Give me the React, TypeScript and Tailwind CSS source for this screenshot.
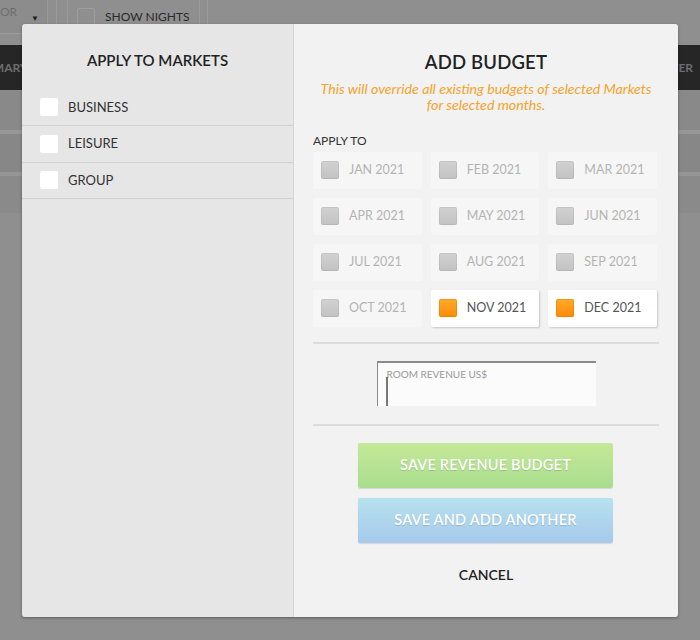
const months = [
  { label: 'JAN 2021', on: false },
  { label: 'FEB 2021', on: false },
  { label: 'MAR 2021', on: false },
  { label: 'APR 2021', on: false },
  { label: 'MAY 2021', on: false },
  { label: 'JUN 2021', on: false },
  { label: 'JUL 2021', on: false },
  { label: 'AUG 2021', on: false },
  { label: 'SEP 2021', on: false },
  { label: 'OCT 2021', on: false },
  { label: 'NOV 2021', on: true },
  { label: 'DEC 2021', on: true },
]

const markets = ['BUSINESS', 'LEISURE', 'GROUP']

function BackPage() {
  return (
    <div className="flex flex-col">
      <div className="flex h-[45px] items-start">
        <div className="flex h-[34px] w-[48px] items-start justify-between border-r border-b border-[#9a9a9a] bg-[#8c8c8c] pl-0 pr-2 pt-[3px] text-[12px] text-[#6f6f6f]">
          <span>OR</span>
          <span className="mt-[9px] text-[8px] text-[#222]">▼</span>
        </div>
        <div className="ml-[8px] h-[45px] w-px bg-[#9a9a9a]" />
        <div className="ml-[10px] flex h-[34px] w-[133px] items-start gap-[10px] border border-t-0 border-[#9a9a9a] pl-[9px] pt-[8px]">
          <div className="h-[18px] w-[18px] rounded-[2px] border border-[#9e9e9e] bg-[#8f8f8f]" />
          <span className="text-[12px] leading-[18px] text-[#2a2a2a]">SHOW NIGHTS</span>
        </div>
        <div className="ml-[7px] h-[45px] w-px bg-[#9a9a9a]" />
      </div>
      <div className="flex h-[45px] items-center justify-between bg-[#262626] text-[12px] font-bold text-[#6e6e6e]">
        <span className="ml-[-34px]">SUMMARY</span>
        <span className="mr-[7px]">FILTER</span>
      </div>
      <div className="h-[40px] bg-[#898989]" />
      <div className="h-[4px] bg-[#979797]" />
      <div className="h-[38px] bg-[#878787]" />
      <div className="h-[4px] bg-[#969696]" />
      <div className="h-[37px] bg-[#8a8a8a]" />
    </div>
  )
}

function MonthCell({ label, on }: { label: string; on: boolean }) {
  return (
    <div
      className={
        on
          ? 'flex h-[37px] items-center gap-[10px] rounded-[2px] bg-white pl-[8px] shadow-[1px_1px_2px_rgba(0,0,0,0.18)]'
          : 'flex h-[37px] items-center gap-[10px] rounded-[2px] bg-[#f6f6f6] pl-[8px]'
      }
    >
      <div
        className={
          on
            ? 'h-[18px] w-[18px] rounded-[2px] bg-gradient-to-b from-[#ffab2a] to-[#ff8a00] shadow-[inset_0_0_0_1px_rgba(220,110,0,0.35)]'
            : 'h-[18px] w-[18px] rounded-[2px] bg-gradient-to-b from-[#d2d2d2] to-[#c2c2c2] shadow-[inset_0_0_0_1px_rgba(0,0,0,0.06)]'
        }
      />
      <span className={on ? 'text-[12.5px] text-[#555]' : 'text-[12.5px] text-[#b4b4b4]'}>{label}</span>
    </div>
  )
}

export default function App() {
  return (
    <div
      className="relative h-[640px] w-[700px] overflow-hidden bg-[#8f8f8f]"
      style={{ fontFamily: '"Lato", "Open Sans", sans-serif' }}
    >
      <BackPage />

      <div className="absolute left-[22px] top-[24px] flex h-[593px] w-[656px] overflow-hidden rounded-[3px] shadow-[0_1px_3px_rgba(0,0,0,0.35)]">
        {/* markets */}
        <div className="flex w-[273px] flex-col border-r border-[#d4d4d4] bg-[#e6e6e6]">
          <h2 className="mt-[25px] text-center text-[15px] font-semibold text-[#222]">APPLY TO MARKETS</h2>
          <div className="mt-[18px] flex flex-col">
            {markets.map((m) => (
              <div key={m} className="flex h-[36.5px] items-center gap-[10px] border-b border-[#d0d0d0] pl-[18px]">
                <div className="h-[18px] w-[18px] rounded-[2px] bg-white" />
                <span className="text-[13px] text-[#333]">{m}</span>
              </div>
            ))}
          </div>
        </div>

        {/* budget */}
        <div className="flex flex-1 flex-col bg-[#f2f2f2] px-[19px]">
          <h1 className="mt-[25px] text-center text-[18.5px] font-semibold tracking-[0.2px] text-[#222]">ADD BUDGET</h1>
          <p className="mt-[4px] text-center text-[14.2px] italic leading-[16px] text-[#f5a32a]">
            This will override all existing budgets of selected Markets
            <br />
            for selected months.
          </p>

          <div className="mt-[19px] text-[12px] text-[#333]">APPLY TO</div>
          <div className="mt-[2px] grid w-[344px] grid-cols-3 gap-x-[9px] gap-y-[9px]">
            {months.map((m) => (
              <MonthCell key={m.label} label={m.label} on={m.on} />
            ))}
          </div>

          <div className="mt-[15px] h-[2px] w-[346px] bg-[#dcdcdc]" />

          <div className="mt-[17px] flex justify-center">
            <div className="relative ml-0 h-[45px] w-[219px] border-t-2 border-l border-[#8a8a8a] bg-[#fbfbfb]">
              <span className="absolute left-[9px] top-[4px] text-[10px] text-[#999]">ROOM REVENUE US$</span>
              <span className="absolute left-[8px] top-[14px] h-[29px] w-[2px] bg-[#777]" />
            </div>
          </div>

          <div className="mt-[18px] h-[2px] w-[346px] bg-[#dcdcdc]" />

          <div className="mt-[17px] flex flex-col items-center gap-[10px] pr-[1px]">
            <button className="h-[45px] w-[255px] rounded-[2px] bg-gradient-to-b from-[#c5e898] to-[#a8de8e] text-[14.5px] font-semibold tracking-[0.2px] text-white shadow-[0_1px_1px_rgba(0,0,0,0.12)] [text-shadow:0_1px_1px_rgba(0,0,0,0.15)]">
              SAVE REVENUE BUDGET
            </button>
            <button className="h-[45px] w-[255px] rounded-[2px] bg-gradient-to-b from-[#b6e2ee] to-[#a7c9ec] text-[14.5px] font-semibold tracking-[0.2px] text-white shadow-[0_1px_1px_rgba(0,0,0,0.12)] [text-shadow:0_1px_1px_rgba(0,0,0,0.15)]">
              SAVE AND ADD ANOTHER
            </button>
          </div>

          <div className="mt-[21px] text-center text-[14px] font-semibold text-[#222]">CANCEL</div>
        </div>
      </div>
    </div>
  )
}
